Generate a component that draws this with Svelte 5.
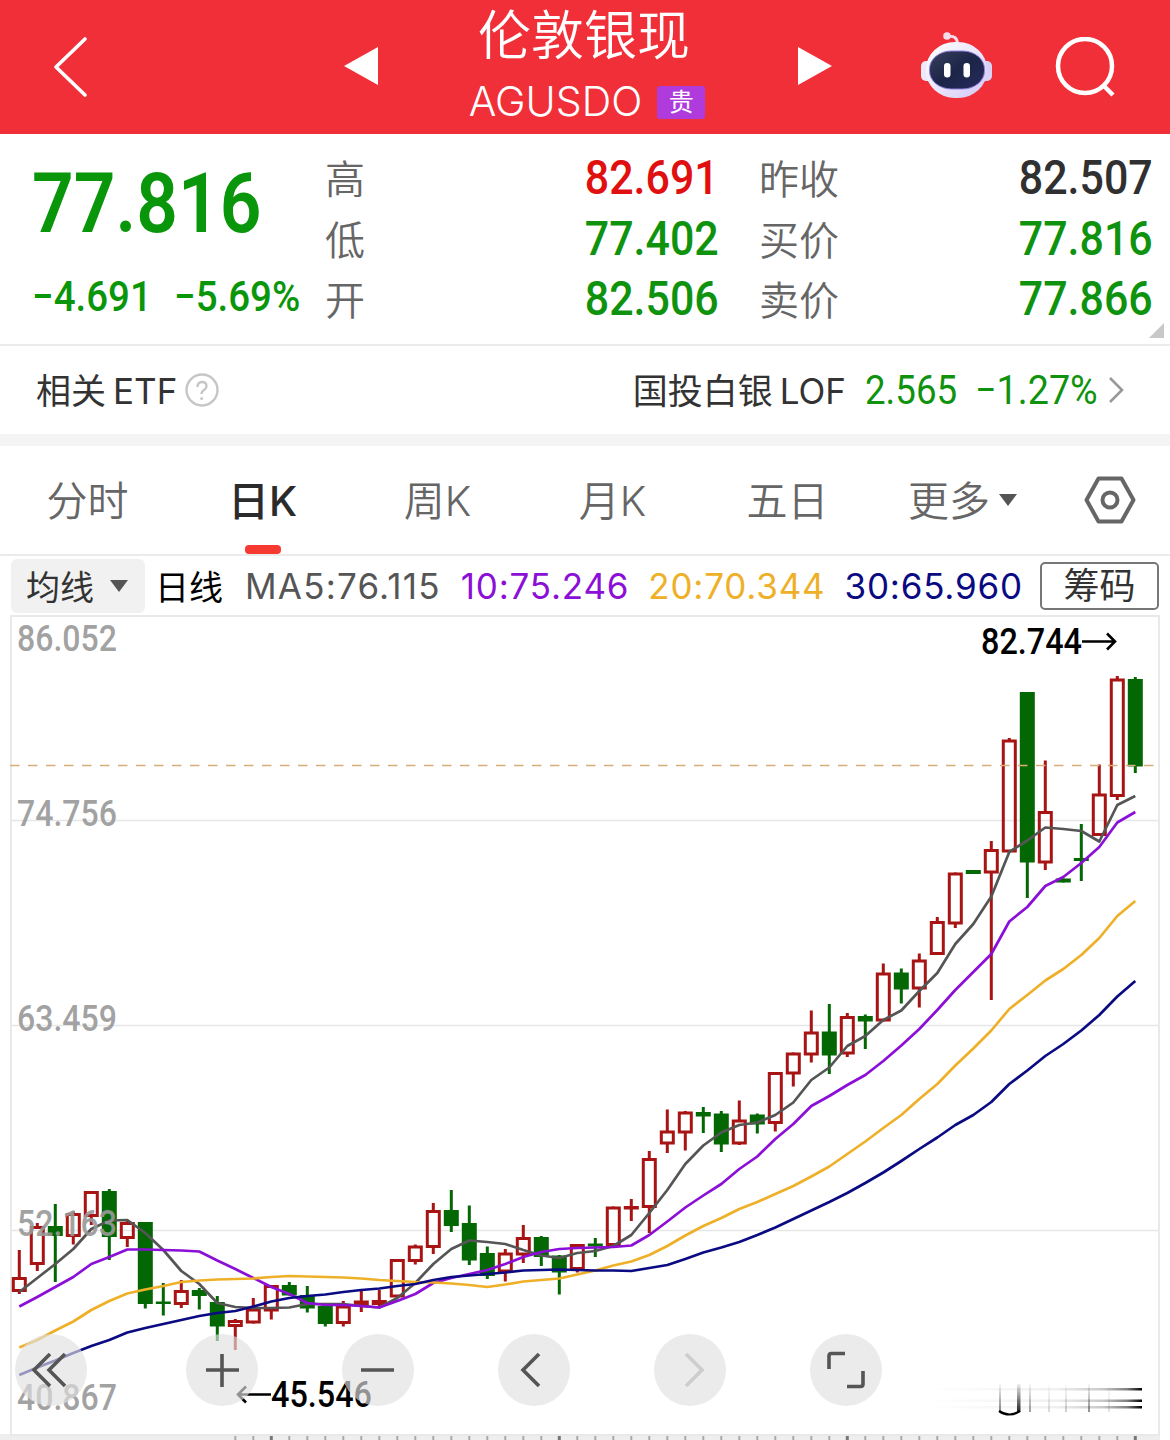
<script>
  // [high, body top, body bottom, low, rising] in chart pixels
  const candles = [
    [1250, 1277, 1292, 1294, 1], [1223, 1226, 1265, 1271, 1], [1204, 1226, 1236, 1282, 0],
    [1211.5, 1213, 1237, 1244.5, 1], [1191, 1191, 1217, 1225, 1], [1189, 1191, 1237, 1260, 0],
    [1221, 1222, 1239, 1247, 1], [1222, 1222, 1304, 1308.5, 0], [1283, 1301.5, 1304, 1315.5, 0],
    [1280, 1290, 1305, 1308, 1], [1288, 1290, 1296, 1309.5, 0], [1296, 1302, 1326.5, 1341, 0],
    [1319, 1320, 1327, 1350, 1], [1298, 1308.5, 1323.5, 1323, 1], [1285, 1285, 1311.5, 1319.5, 1],
    [1282, 1285, 1295.5, 1295.5, 0], [1286, 1295, 1308.5, 1312.5, 0], [1303, 1306, 1324, 1326.5, 0],
    [1301, 1305.5, 1324, 1326.5, 1], [1290, 1300.5, 1306, 1312, 1], [1290, 1300, 1305, 1308, 1],
    [1259, 1259, 1297.5, 1297.5, 1], [1244.5, 1245.5, 1262, 1264.5, 1], [1203, 1210, 1248, 1254, 1],
    [1190, 1210, 1226, 1232, 0], [1205.5, 1223, 1260.5, 1265, 0], [1246.5, 1253, 1276, 1279, 0],
    [1249, 1252.5, 1272.5, 1281.5, 1], [1225, 1237, 1255.5, 1263, 1], [1236, 1237, 1257, 1266, 0],
    [1255, 1255.5, 1272.5, 1294.5, 0], [1244, 1244, 1270, 1272.5, 1], [1238, 1243.5, 1246.5, 1257, 0],
    [1206.5, 1206.5, 1246, 1246, 1], [1199, 1206, 1209, 1221, 1], [1151, 1158, 1208, 1233, 1],
    [1109.5, 1130.5, 1144.5, 1153, 1], [1111, 1111.5, 1133.5, 1150.5, 1], [1107, 1112, 1116.5, 1133, 0],
    [1111, 1113.5, 1144.5, 1152, 0], [1100.5, 1119.5, 1144.5, 1145, 1], [1113.5, 1114.5, 1124.5, 1133.5, 0],
    [1072, 1072, 1124, 1131.5, 1], [1052.5, 1052.5, 1074.5, 1086.5, 1], [1010.5, 1031.5, 1055.5, 1062.5, 1],
    [1004, 1031.5, 1055.5, 1074, 0], [1013, 1016, 1054.5, 1057, 1], [1014.5, 1016, 1021.5, 1049, 0],
    [963.5, 972.5, 1021.5, 1021.5, 1], [968.5, 972.5, 989.5, 1003.5, 0], [953.5, 959.5, 989.5, 1007.5, 1],
    [917, 921, 955, 955, 1], [872.5, 872.5, 924.5, 928, 1], [870, 870, 874, 874, 0],
    [841, 849, 873.5, 1000, 1], [738, 739.5, 852.5, 852.5, 1], [692, 692, 862.5, 898, 0],
    [760.5, 811, 863.5, 870, 1], [878.5, 878.5, 882.5, 882.5, 0], [824, 858, 861, 881, 0],
    [764.5, 793.5, 836, 836, 1], [676, 678.5, 797, 800, 1], [677, 679, 766.5, 773, 0]
  ];

  const averages = [
    { color: '#555', values: [1292, 1278, 1264, 1249, 1229, 1220.5, 1220, 1233, 1250, 1271, 1284, 1303, 1307, 1308, 1308, 1307.5, 1304, 1304, 1304, 1306, 1307.5, 1298, 1283, 1264, 1249, 1240.5, 1242, 1244, 1250, 1255.5, 1258, 1253, 1251, 1246, 1235, 1213, 1190, 1164, 1145.5, 1132.5, 1125, 1122.5, 1115, 1102.5, 1080, 1067.5, 1046, 1036, 1020, 1010.5, 991, 973, 944, 924, 896.5, 852, 840.5, 827.5, 829, 831, 841.5, 805, 796] },
    { color: '#8b0fd6', values: [1306.5, 1297, 1287, 1277, 1264, 1257, 1249.5, 1249.5, 1250, 1250.5, 1251.5, 1260.5, 1269, 1278, 1287, 1294, 1303, 1305, 1305, 1306, 1307.5, 1301, 1294, 1283, 1278, 1274, 1270, 1264, 1257, 1252, 1249, 1248, 1247.5, 1247, 1245.5, 1235, 1221.5, 1207.5, 1195.5, 1184, 1169, 1156.5, 1139, 1124, 1106, 1096, 1085, 1075, 1061, 1045.5, 1029, 1010, 990, 972, 954, 921.5, 907, 886, 877, 863, 847, 822.5, 812] },
    { color: '#eeb028', values: [1347.5, 1340, 1330.5, 1321.5, 1310, 1301, 1293.5, 1289.5, 1286, 1282, 1280.5, 1279.5, 1279, 1278.5, 1277, 1276, 1276.5, 1277, 1277.5, 1278.5, 1280, 1281, 1282, 1282.5, 1283.5, 1285, 1287, 1284.5, 1281.5, 1280, 1278.5, 1274.5, 1270.5, 1265.5, 1261.5, 1255, 1246, 1235.5, 1226, 1218, 1209, 1202, 1194, 1186, 1176.5, 1166.5, 1154, 1141.5, 1128, 1115, 1099, 1084, 1065.5, 1048.5, 1030.5, 1009, 995, 980.5, 969, 955, 938, 916, 901] },
    { color: '#0a0a82', values: [1375, 1367.5, 1360.5, 1353, 1346, 1340, 1332.5, 1328, 1324, 1320, 1316, 1313, 1311, 1306.5, 1301.5, 1298, 1296, 1294.5, 1292, 1290, 1288.5, 1286, 1284, 1280, 1277, 1275.5, 1274, 1272.5, 1270.5, 1270, 1269.5, 1270, 1270.5, 1270.5, 1271, 1268, 1265, 1259, 1252.5, 1247.5, 1242, 1235, 1227.5, 1219, 1210.5, 1202, 1193, 1183, 1172.5, 1161, 1149, 1137.5, 1125, 1115, 1102, 1084, 1070.5, 1056, 1044, 1030.5, 1015, 996.5, 981] }
  ];

  const quotes = [
    { label: '高', value: '82.691', tone: 'up' },
    { label: '昨收', value: '82.507', tone: 'flat' },
    { label: '低', value: '77.402', tone: 'down' },
    { label: '买价', value: '77.816', tone: 'down' },
    { label: '开', value: '82.506', tone: 'down' },
    { label: '卖价', value: '77.866', tone: 'down' }
  ];

  const tabs = ['分时', '日K', '周K', '月K', '五日'];
  let active = $state('日K');

  const scale = [
    { y: 651, text: '86.052' },
    { y: 826, text: '74.756' },
    { y: 1031, text: '63.459' },
    { y: 1236, text: '52.163' },
    { y: 1410, text: '40.867' }
  ];

  const controls = [
    { name: 'first', d: 'M35 20L19 36l16 16M50 20L34 36l16 16' },
    { name: 'zoom in', d: 'M36 20v33M20 36h33' },
    { name: 'zoom out', d: 'M19 36h33' },
    { name: 'previous', d: 'M41 20L25 36l16 16' },
    { name: 'next', d: 'M32 20l16 16-16 16', off: true },
    { name: 'fullscreen', d: 'M19 35V22q0-2.500 2.500-2.500H35M53 37v13q0 2.500-2.500 2.500H37' }
  ];

  const cx = (i) => 19.3 + i * 18;
  const line = (values) => values.map((y, i) => `${cx(i)},${y}`).join(' ');
</script>

<div class="page">
  <header>
    <button class="back" aria-label="back">
      <svg width="36" height="62" viewBox="0 0 36 62"><path d="M33 3L4 31l29 28" /></svg>
    </button>
    <svg class="prev" width="34" height="38" viewBox="0 0 34 38"><path d="M34 0v38L0 19z" /></svg>
    <div class="title">
      <h1>伦敦银现</h1>
      <div class="code"><span>AGUSDO</span><em>贵</em></div>
    </div>
    <svg class="next" width="34" height="38" viewBox="0 0 34 38"><path d="M0 0v38l34-19z" /></svg>
    <svg class="robot" width="74" height="68" viewBox="0 0 74 68">
      <defs>
        <linearGradient id="shell" x1="0" y1="0" x2="1" y2="1">
          <stop offset="0" stop-color="#fff" />
          <stop offset=".55" stop-color="#e9e3fb" />
          <stop offset="1" stop-color="#cfc6f5" />
        </linearGradient>
        <linearGradient id="visor" x1="0" y1="0" x2="1" y2="1">
          <stop offset="0" stop-color="#39405f" />
          <stop offset=".5" stop-color="#1c2547" />
          <stop offset="1" stop-color="#262a5c" />
        </linearGradient>
      </defs>
      <path d="M28 5.500q9-1.500 9.500 7" fill="none" stroke="#f6dcea" stroke-width="2.800" />
      <circle cx="27" cy="5" r="3.800" fill="#f6dcea" />
      <rect x="1" y="30" width="12" height="20" rx="5" fill="#eee8fb" />
      <rect x="60" y="30" width="12" height="20" rx="5" fill="#d8d2f6" />
      <rect x="6" y="11" width="61" height="56" rx="29" ry="27" fill="url(#shell)" />
      <rect x="9.500" y="20" width="55" height="38" rx="22" ry="18" fill="url(#visor)" stroke="#8f80e0" />
      <rect x="24" y="32" width="6.500" height="14.500" rx="3.200" fill="#fff" />
      <rect x="43.500" y="32" width="6.500" height="14.500" rx="3.200" fill="#fff" />
    </svg>
    <svg class="search" width="62" height="62" viewBox="0 0 62 62">
      <circle cx="30" cy="29" r="27" />
      <path d="M48 48l10 10" />
    </svg>
  </header>

  <section class="quote">
    <div class="last">
      <div class="price num">77.816</div>
      <div class="change"><span class="num">−4.691</span><span class="num">−5.69%</span></div>
    </div>
    <div class="grid">
      {#each quotes as q}
        <span class="label">{q.label}</span>
        <span class="value {q.tone}"><b class="num">{q.value}</b></span>
      {/each}
    </div>
    <i class="corner"></i>
  </section>

  <section class="etf">
    <span class="name">相关<span class="latin">ETF</span></span>
    <svg class="help" width="34" height="34" viewBox="0 0 34 34">
      <circle cx="17" cy="17" r="15.500" />
      <path d="M12.500 14q0-5 4.500-5t4.500 4q0 2.500-2.500 4t-2.500 4" />
      <circle class="dot" cx="16.700" cy="25.500" r="1.500" />
    </svg>
    <span class="fund">国投白银<span class="latin">LOF</span></span>
    <span class="fund-price num">2.565</span>
    <span class="fund-change num">−1.27%</span>
    <svg class="more" width="16" height="28" viewBox="0 0 16 28"><path d="M2 2l12 12L2 26" /></svg>
  </section>

  <nav>
    {#each tabs as tab}
      <button class:active={active === tab} onclick={() => (active = tab)}>{tab}</button>
    {/each}
    <button class="others">更多<i class="caret"></i></button>
    <svg class="settings" width="52" height="48" viewBox="0 0 52 48">
      <path d="M14.500 2.500h23L49.500 24l-12 21.500h-23L2.500 24z" />
      <circle cx="26" cy="24" r="7.500" />
    </svg>
  </nav>

  <section class="indicators">
    <button class="kind">均线<i class="caret"></i></button>
    <span class="period">日线</span>
    <span class="ma ma5">MA5:76.115</span>
    <span class="ma ma10">10:75.246</span>
    <span class="ma ma20">20:70.344</span>
    <span class="ma ma30">30:65.960</span>
    <button class="chips">筹码</button>
  </section>

  <section class="chart">
    <svg width="1170" height="825" viewBox="0 615 1170 825">
      <defs>
        <linearGradient id="fade" x1="928" x2="1142" y1="0" y2="0" gradientUnits="userSpaceOnUse">
          <stop offset="0" stop-color="#000" stop-opacity="0" />
          <stop offset=".6" stop-color="#000" stop-opacity=".06" />
          <stop offset=".82" stop-color="#000" stop-opacity=".22" />
          <stop offset=".93" stop-color="#000" stop-opacity=".5" />
          <stop offset="1" stop-color="#000" />
        </linearGradient>
        <linearGradient id="drop" x1="0" x2="0" y1="1382" y2="1413" gradientUnits="userSpaceOnUse">
          <stop offset="0" stop-color="#000" stop-opacity="0" />
          <stop offset="1" stop-color="#000" />
        </linearGradient>
      </defs>

      <rect x="0" y="1434" width="1160" height="6" fill="#eee" />
      <rect x="11" y="616" width="1148" height="819" fill="#fff" stroke="#e9e9e9" stroke-width="2" />
      {#each [820.5, 1025.5, 1230.5] as y}
        <line x1="12" x2="1158" y1={y} y2={y} stroke="#e6e6e6" stroke-width="1.500" />
      {/each}
      {#each candles as _, i}
        {#if i >= 12}
          <line
            x1={cx(i)} x2={cx(i)} y1="1436" y2="1440"
            stroke={i % 16 === 14 ? '#777' : '#aaa'}
            stroke-width={i % 16 === 14 ? 3 : 2}
          />
        {/if}
      {/each}

      {#each candles as [high, top, bottom, low, rising], i}
        {#if rising}
          <g stroke="#a81313" stroke-width="3" fill="none">
            <path d="M{cx(i)} {high}V{top + 1}M{cx(i)} {bottom - 1}V{Math.max(low, bottom)}" />
            <rect x={cx(i) - 6} y={top + 1.5} width="12" height={Math.max(bottom - top - 3, 0.5)} />
          </g>
        {:else}
          <rect x={cx(i) - 1.5} y={high} width="3" height={low - high} fill="#036803" />
          <rect x={cx(i) - 7.5} y={top} width="15" height={bottom - top} fill="#036803" />
        {/if}
      {/each}

      <line x1="10" x2="1156" y1="765.500" y2="765.500" stroke="#d8ae78" stroke-width="1.500" stroke-dasharray="9.500 8.500" />
      {#each averages as ma}
        <polyline points={line(ma.values)} fill="none" stroke={ma.color} stroke-width="2.700" stroke-linejoin="round" />
      {/each}

      {#each scale as s}
        <text class="scale" x="17" y={s.y} textLength="100" lengthAdjust="spacingAndGlyphs">{s.text}</text>
      {/each}
      <text class="mark" x="981" y="654" textLength="101" lengthAdjust="spacingAndGlyphs">82.744</text>
      <path class="arrow" d="M1082 641.500h33M1107 633.500l8 8-8 8" />
      <text class="mark" x="271" y="1407" textLength="101" lengthAdjust="spacingAndGlyphs">45.546</text>
      <path class="arrow" d="M271 1394.500h-33M246 1386.500l-8 8 8 8" />

      <g class="stamp">
        {#each [1389, 1400.5, 1407] as y}
          <rect x="928" y={y - 1} width="214" height="2.500" fill="url(#fade)" />
        {/each}
        <rect x="999" y="1384" width="2" height="28" fill="url(#drop)" opacity=".5" />
        <rect x="1017" y="1384" width="3.500" height="28" fill="url(#drop)" opacity=".9" />
        {#each [1029, 1048, 1065, 1088, 1108] as x, i}
          <rect {x} y="1384" width="2" height="28" fill="url(#drop)" opacity={[0.4, 0.15, 0.2, 0.45, 0.12][i]} />
        {/each}
        <path d="M999 1411q10 7 21 0" fill="none" stroke="#000" stroke-width="2.200" />
      </g>
    </svg>

    <div class="controls">
      {#each controls as c}
        <button aria-label={c.name} class:off={c.off}>
          <svg width="72" height="72" viewBox="0 0 72 72"><path d={c.d} /></svg>
        </button>
      {/each}
    </div>
  </section>
</div>

<style>
  :global(body) {
    background: #fff;
  }

  .page {
    width: 1170px;
    height: 1440px;
    overflow: hidden;
    font-family: Inter, 'Noto Sans CJK SC', sans-serif;
    color: #333;
  }

  button {
    border: none;
    background: none;
    padding: 0;
    font: inherit;
    color: inherit;
    cursor: pointer;
  }

  svg {
    display: block;
    flex-shrink: 0;
  }

  .num {
    display: inline-block;
    font-family: Roboto, sans-serif;
    font-weight: 500;
    white-space: nowrap;
    transform: scaleX(0.895);
  }

  header {
    display: flex;
    align-items: flex-start;
    height: 134px;
    background: #f12f38;
    color: #fff;
  }

  header svg {
    fill: #fff;
  }

  .back {
    margin: 36px 0 0 52px;
  }

  .back path,
  .search {
    fill: none;
    stroke: #fff;
    stroke-width: 3.6;
  }

  .back path {
    stroke-linecap: round;
    stroke-linejoin: round;
  }

  header .search {
    margin: 37px 0 0 61px;
    fill: none;
    stroke-width: 4.5;
  }

  .prev {
    margin: 47px 0 0 256px;
  }

  .next {
    margin-top: 47px;
  }

  .title {
    width: 420px;
    text-align: center;
  }

  h1 {
    margin: 0 8px 0 0;
    font-size: 53px;
    line-height: 72px;
    height: 72px;
    font-weight: 350;
  }

  .code {
    display: flex;
    justify-content: center;
    align-items: center;
    gap: 15px;
    height: 60px;
    margin-left: -2px;
    font-size: 41px;
    font-weight: 300;
  }

  .code span {
    line-height: 56px;
    padding-bottom: 2px;
  }

  .code em {
    width: 48px;
    height: 33px;
    border-radius: 3px;
    background: #b03bdc;
    font-size: 25px;
    line-height: 33px;
    font-style: normal;
    font-weight: 400;
  }

  .robot {
    margin: 31px 0 0 88px;
  }

  .quote {
    position: relative;
    display: flex;
    height: 210px;
    border-bottom: 2px solid #ebebeb;
  }

  .last {
    width: 325px;
    padding-left: 32px;
    box-sizing: border-box;
    color: #0a960a;
  }

  .price {
    display: block;
    margin-top: 20px;
    font-size: 83px;
    font-weight: 600;
    line-height: 100px;
    transform: scaleX(0.88);
    transform-origin: left;
  }

  .change {
    display: flex;
    gap: 8px;
    height: 60px;
    margin-top: 12px;
    font-size: 43px;
    line-height: 60px;
  }

  .change .num {
    transform-origin: left;
    width: 134px;
  }

  .grid {
    display: grid;
    grid-template-columns: 100px 254px 100px 254px;
    column-gap: 40px;
    grid-template-rows: repeat(3, 60.5px);
    padding-top: 13px;
  }

  .label {
    padding-top: 3px;
    font-size: 40px;
    line-height: 60px;
    font-weight: 350;
    color: #666;
    white-space: nowrap;
  }

  .value {
    text-align: right;
    font-size: 48px;
    line-height: 60px;
  }

  .value .num {
    transform-origin: right;
  }

  .up {
    color: #e01010;
  }

  .flat {
    color: #303030;
  }

  .down {
    color: #0f930f;
  }

  .corner {
    position: absolute;
    right: 6px;
    bottom: 6px;
    border-left: 15px solid transparent;
    border-bottom: 15px solid #c8c8c8;
  }

  .etf {
    display: flex;
    align-items: center;
    height: 88px;
    padding: 0 46px 0 36px;
    border-bottom: 12px solid #f4f4f4;
    font-size: 35px;
  }

  .name,
  .fund {
    padding-bottom: 4px;
  }

  .latin {
    margin-left: 7px;
  }

  .help {
    margin: 0 auto 0 8px;
    fill: none;
    stroke: #c6c6c6;
    stroke-width: 2.4;
  }

  .help .dot {
    fill: #c6c6c6;
    stroke: none;
  }

  .fund-price,
  .fund-change {
    color: #0f930f;
    font-size: 41px;
    font-weight: 400;
    transform-origin: left;
  }

  .fund-price {
    width: 110px;
    margin-left: 19px;
  }

  .fund-change {
    width: 133px;
    transform: scaleX(0.92);
  }

  .more {
    fill: none;
    stroke: #999;
    stroke-width: 2.6;
  }

  nav {
    display: flex;
    align-items: center;
    height: 108px;
    border-bottom: 2px solid #ebebeb;
    font-size: 41px;
    font-weight: 350;
    color: #666;
  }

  nav button {
    position: relative;
    width: 175px;
    height: 108px;
    padding-bottom: 4px;
  }

  .active {
    color: #2b2b2b;
    font-weight: 500;
  }

  .active::after {
    content: '';
    position: absolute;
    left: 70px;
    bottom: 0;
    width: 36px;
    height: 9px;
    border-radius: 4px;
    background: #f63a32;
  }

  .others {
    display: flex;
    align-items: center;
    justify-content: center;
    gap: 9px;
  }

  .caret {
    border: 9px solid transparent;
    border-top: 12px solid #555;
    border-bottom: none;
  }

  .others .caret {
    margin-top: 4px;
  }

  .settings {
    margin-left: 34px;
    fill: none;
    stroke: #666;
    stroke-width: 4;
    stroke-linejoin: round;
  }

  .indicators {
    display: flex;
    align-items: center;
    height: 59px;
    padding: 0 11px;
    font-size: 34px;
    white-space: nowrap;
  }

  .kind {
    display: flex;
    align-items: center;
    justify-content: center;
    gap: 16px;
    width: 134px;
    height: 54px;
    padding-right: 2px;
    border-radius: 6px;
    background: #f1f1f1;
  }

  .period {
    width: 78px;
    margin-left: 10px;
    color: #000;
  }

  .ma {
    margin-left: 19px;
    font-size: 35px;
    letter-spacing: 0.8px;
  }

  .ma5 {
    margin-left: 12px;
    letter-spacing: 1.2px;
    color: #555;
  }

  .ma10 {
    margin-left: 20px;
    color: #8b0fd6;
  }

  .ma20 {
    color: #eeb028;
  }

  .ma30 {
    color: #0a0a82;
  }

  .chips {
    width: 119px;
    height: 48px;
    margin-left: auto;
    border: 2px solid #777;
    border-radius: 5px;
    font-size: 36px;
    line-height: 44px;
  }

  .chart {
    position: relative;
    height: 825px;
  }

  .scale,
  .mark {
    font-family: Roboto, sans-serif;
    font-size: 36px;
    font-weight: 500;
  }

  .scale {
    fill: #999;
    fill-opacity: 0.92;
  }

  .mark {
    fill: #000;
  }

  .arrow {
    fill: none;
    stroke: #000;
    stroke-width: 2.6;
  }

  .controls {
    position: absolute;
    left: 15px;
    top: 719px;
    display: grid;
    grid-template-columns: 171px repeat(5, 156px);
  }

  .controls button {
    width: 72px;
    height: 72px;
    border-radius: 50%;
    background: rgba(224, 224, 224, 0.65);
  }

  .controls path {
    fill: none;
    stroke: #555;
    stroke-width: 3.6;
  }

  .controls .off path {
    stroke: #cdcdcd;
  }
</style>
